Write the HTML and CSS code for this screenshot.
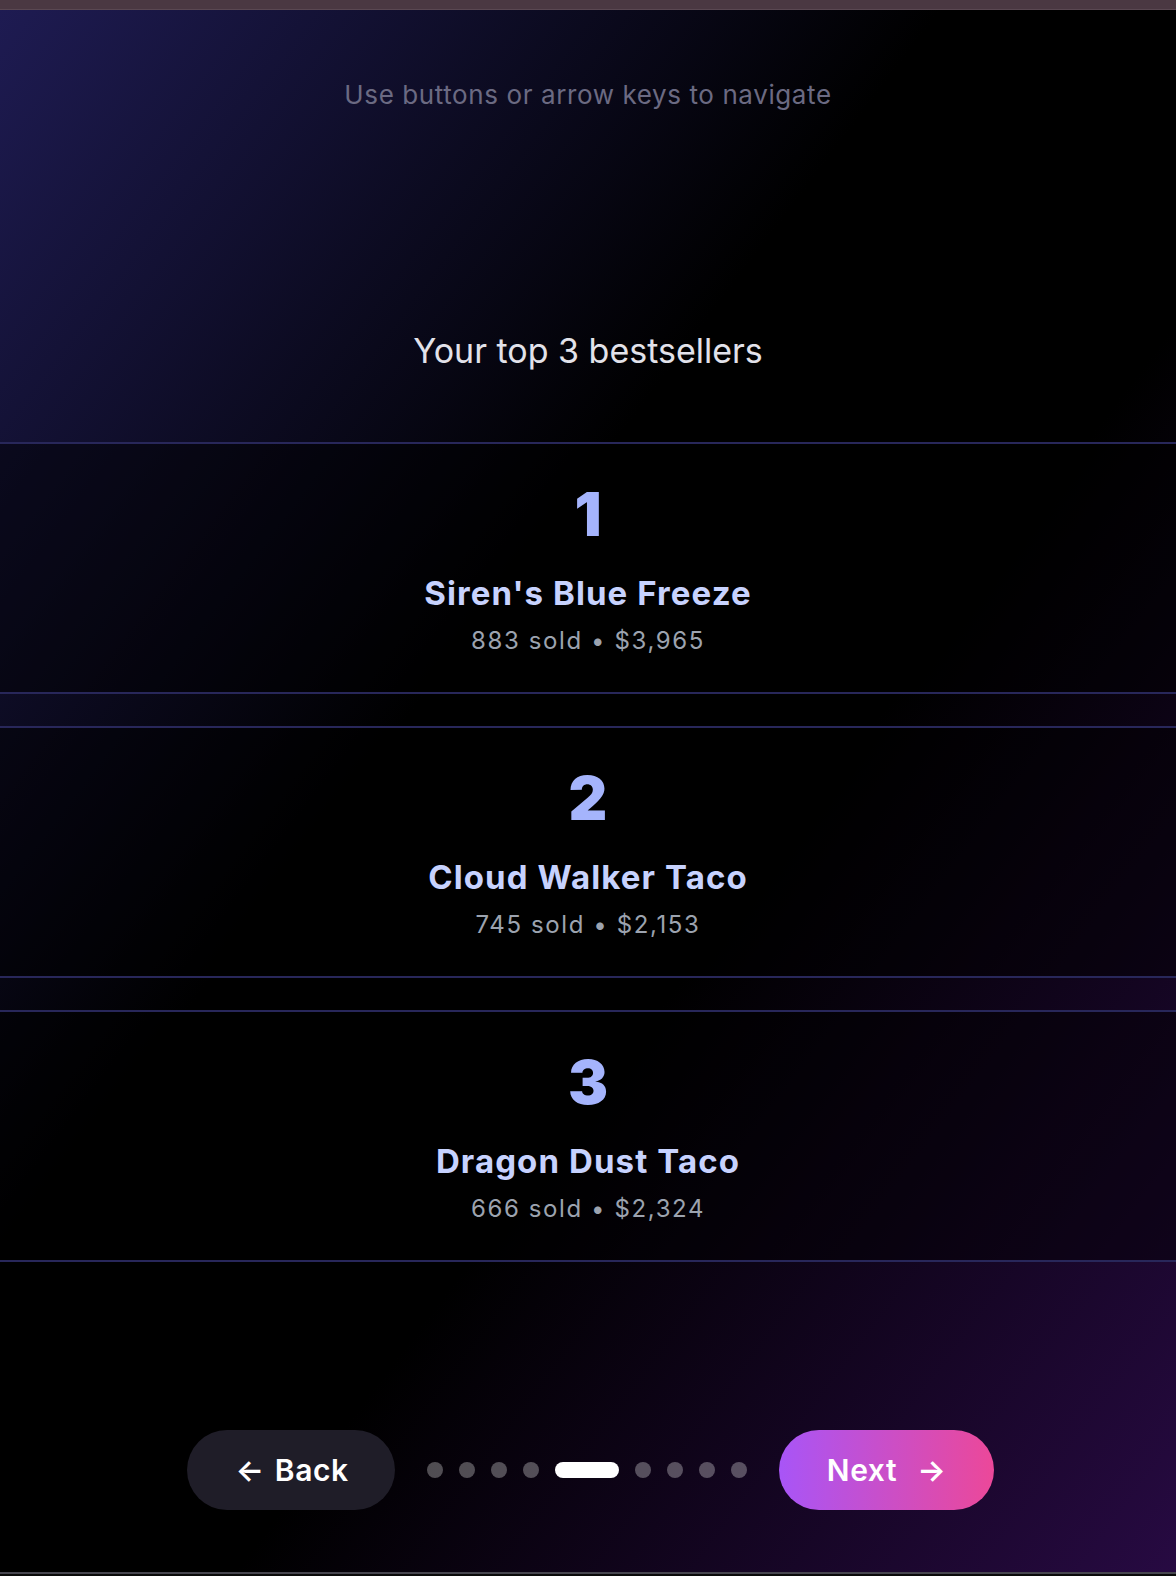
FILE: index.html
```html
<!DOCTYPE html>
<html lang="en">
<head>
<meta charset="utf-8">
<title>Your top 3 bestsellers</title>
<link rel="stylesheet" href="styles.css">
</head>
<body>
<div class="topbar"></div>
<main class="stage">
  <p class="hint">Use buttons or arrow keys to navigate</p>
  <h1 class="title">Your top 3 bestsellers</h1>
  <section class="list">
    <article class="card">
      <div class="rank">1</div>
      <div class="name">Siren's Blue Freeze</div>
      <div class="stats">883 sold • $3,965</div>
    </article>
    <article class="card">
      <div class="rank">2</div>
      <div class="name">Cloud Walker Taco</div>
      <div class="stats">745 sold • $2,153</div>
    </article>
    <article class="card">
      <div class="rank">3</div>
      <div class="name">Dragon Dust Taco</div>
      <div class="stats">666 sold • $2,324</div>
    </article>
  </section>
  <nav class="nav">
    <button class="btn btn-back"><span class="arrow">←</span><span>Back</span></button>
    <div class="dots">
      <span class="dot"></span>
      <span class="dot"></span>
      <span class="dot"></span>
      <span class="dot"></span>
      <span class="dot active"></span>
      <span class="dot"></span>
      <span class="dot"></span>
      <span class="dot"></span>
      <span class="dot"></span>
    </div>
    <button class="btn btn-next"><span>Next</span><span class="arrow">→</span></button>
  </nav>
</main>
<div class="bottombar"></div>
</body>
</html>
```

FILE: styles.css
```css
* { box-sizing: border-box; }
html, body {
  margin: 0;
  padding: 0;
  background: #0a0a0c;
  font-family: Inter, "Noto Sans", "Liberation Sans", sans-serif;
}
.topbar {
  height: 10px;
  background: #4a3842;
  border-bottom: 1px solid #5a4852;
}
.stage {
  height: 1562px;
  display: flex;
  flex-direction: column;
  align-items: center;
  background: linear-gradient(to bottom right, #1e1b52 0%, #000000 40%, #000000 60%, #270a42 100%);
  overflow: hidden;
}
.hint {
  margin: 68px 0 0;
  font-size: 26px;
  line-height: 34px;
  letter-spacing: 0.6px;
  color: #6b6a82;
  font-weight: 400;
}
.title {
  margin: 219px 0 0;
  font-size: 34px;
  line-height: 40px;
  font-weight: 400;
  color: #e2e2ea;
}
.list {
  margin-top: 71px;
  width: 100%;
  display: flex;
  flex-direction: column;
  gap: 32px;
}
.card {
  height: 252px;
  border-top: 2px solid #28275a;
  border-bottom: 2px solid #28275a;
  background: rgba(0, 0, 0, 0.45);
  display: flex;
  flex-direction: column;
  align-items: center;
  padding-top: 40px;
}
.rank {
  font-size: 60px;
  line-height: 60px;
  font-weight: 900;
  color: #a5b4fc;
}
.name {
  margin-top: 30px;
  font-size: 33px;
  line-height: 38px;
  font-weight: 700;
  letter-spacing: 1.1px;
  color: #c7d2fe;
}
.stats {
  margin-top: 13px;
  font-size: 24px;
  line-height: 32px;
  letter-spacing: 1.6px;
  color: #9ca3af;
}
.nav {
  margin-top: 168px;
  padding-left: 5px;
  display: flex;
  align-items: center;
  gap: 32px;
}
.btn {
  height: 80px;
  padding: 0 48px;
  border: none;
  border-radius: 40px;
  font-family: inherit;
  font-size: 30px;
  font-weight: 600;
  letter-spacing: 0.6px;
  color: #ffffff;
  display: flex;
  align-items: center;
}
.btn-back {
  background: #1f1d28;
  gap: 10px;
  padding-left: 49px;
  padding-right: 46px;
}
.btn-next {
  background: linear-gradient(to right, #a855f7, #ec4899);
  gap: 20px;
}
.dots {
  display: flex;
  align-items: center;
  gap: 16px;
}
.dot {
  width: 16px;
  height: 16px;
  border-radius: 8px;
  background: rgba(255, 255, 255, 0.3);
}
.dot.active {
  width: 64px;
  background: #ffffff;
}
.bottombar {
  height: 4px;
  border-top: 2px solid #47464f;
  background: #0a0a0a;
}
```
